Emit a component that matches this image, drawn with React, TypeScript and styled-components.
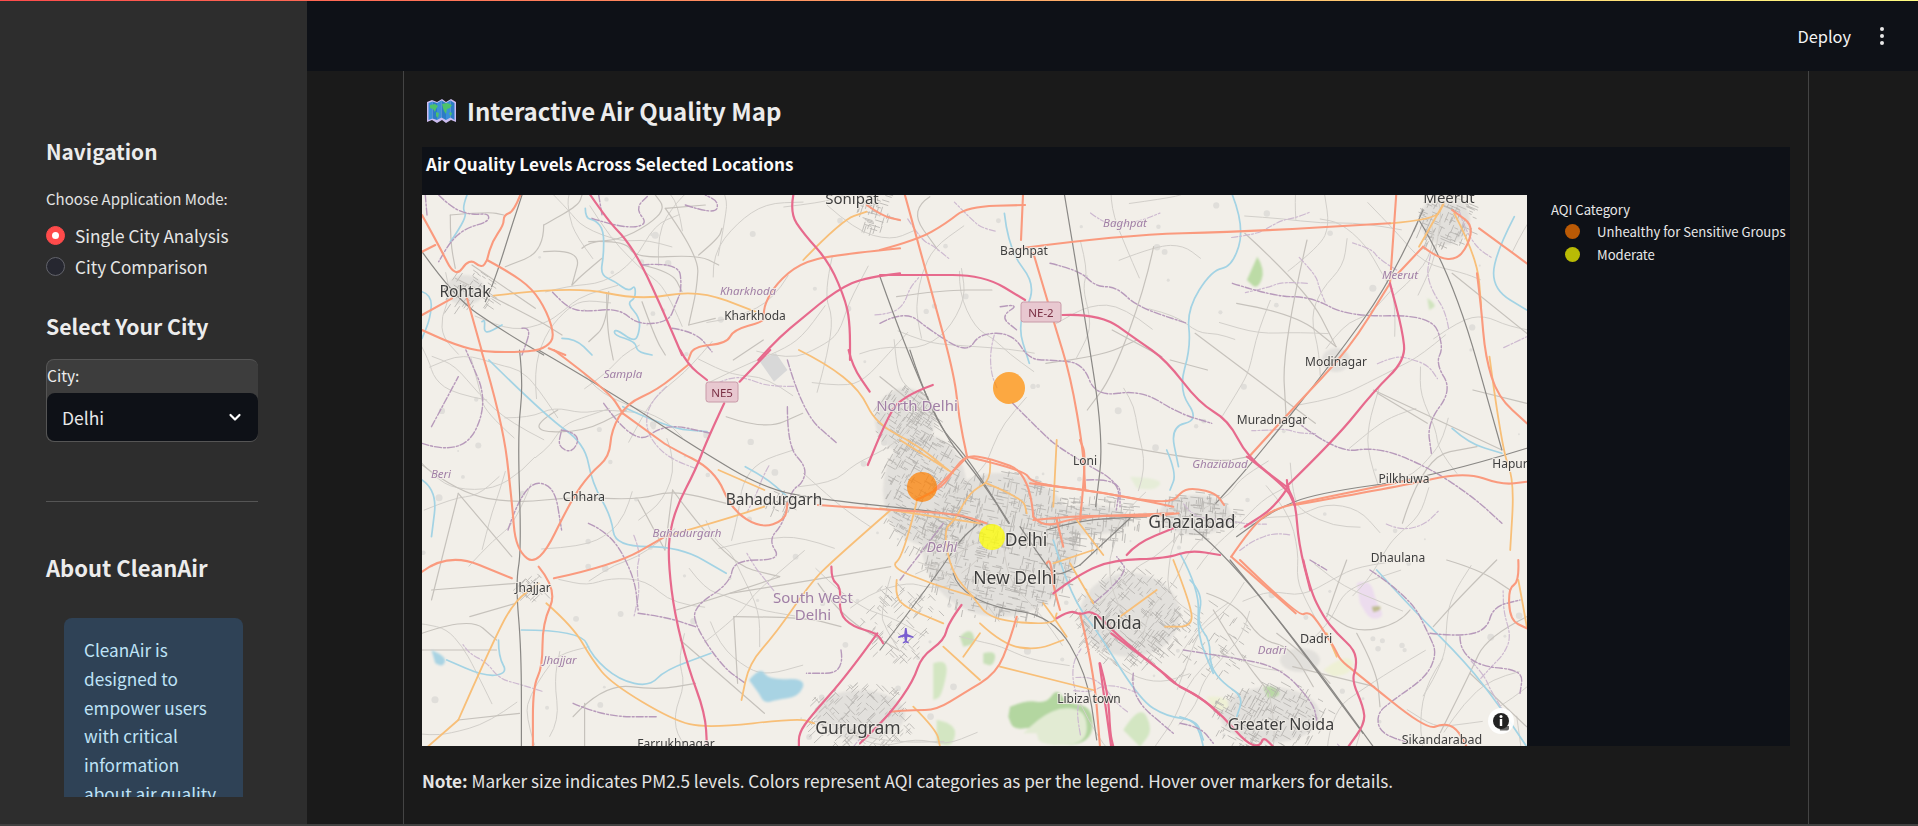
import React from "react";
import styled, { createGlobalStyle } from "styled-components";

const FONT = `"Noto Sans CJK SC", "Source Sans Pro", "Noto Sans", sans-serif`;

const Global = createGlobalStyle`
  html, body { margin: 0; padding: 0; height: 826px; overflow: hidden; background: #1a1a1a; }
  * { box-sizing: border-box; }
  body { font-family: ${FONT}; color: #fafafa; }
`;

const Page = styled.div`
  position: relative;
  display: grid;
  grid-template-columns: 307px 1fr;
  width: 1918px;
  height: 826px;
  border-bottom: 2px solid #404040;
  overflow: hidden;
`;
const TopLine = styled.div`
  position: absolute;
  top: 0; left: 0; right: 0;
  height: 1px;
  background: linear-gradient(90deg, #ff4b4b, #fffd80);
  z-index: 2;
`;
const Sidebar = styled.aside`
  background: #2d2d2d;
  height: 824px;
`;
const SideScroll = styled.div`
  height: 797px;
  overflow: hidden;
  padding: 136px 49px 0 46px;
`;
const SideHeading = styled.h3<{ $top?: number; $size: number }>`
  margin: ${(p) => p.$top ?? 0}px 0 0;
  font-size: ${(p) => p.$size}px;
  line-height: 30px;
  font-weight: 600;
  color: #ececec;
`;
const RadioLabel = styled.div`
  margin-top: 23px;
  font-size: 15px;
  line-height: 20px;
  color: #e2e2e2;
`;
const RadioRow = styled.div<{ $first?: boolean }>`
  display: flex;
  align-items: center;
  gap: 10px;
  height: 24px;
  margin-top: ${(p) => (p.$first ? 14 : 7)}px;
  font-size: 17.2px;
  color: #e6e6e6;
`;
const RadioDot = styled.span<{ $on?: boolean }>`
  width: 19px;
  height: 19px;
  border-radius: 50%;
  flex: none;
  display: flex;
  align-items: center;
  justify-content: center;
  background: ${(p) => (p.$on ? "#ff4b4b" : "#262730")};
  border: 1px solid ${(p) => (p.$on ? "#ff4b4b" : "#62636b")};
  &::after {
    content: "";
    display: ${(p) => (p.$on ? "block" : "none")};
    width: 7px;
    height: 7px;
    border-radius: 50%;
    background: #fff;
  }
`;
const SelectGroup = styled.div`
  margin-top: 18px;
  height: 83px;
  background: #3d3d3d;
  border: 1px solid #555;
  border-right: none;
  border-radius: 8px;
  display: flex;
  flex-direction: column;
`;
const SelectLabel = styled.label`
  height: 33px;
  font-size: 15.5px;
  line-height: 30px;
  color: #ececec;
`;
const SelectBox = styled.div`
  flex: 1;
  background: #0e1117;
  border-radius: 8px;
  display: flex;
  align-items: center;
  justify-content: space-between;
  padding: 0 16px 0 15px;
  font-size: 17.5px;
  color: #e8e8e8;
`;
const Divider = styled.hr`
  border: none;
  border-top: 1px solid #555;
  margin: 59px 0 0;
`;
const InfoBox = styled.div`
  margin: 36px 15px 0 18px;
  background: #2f4256;
  border-radius: 8px;
  padding: 18px 18px 18px 20px;
  font-size: 17.2px;
  line-height: 28.8px;
  color: #bfe3f7;
`;

const Main = styled.main`
  display: flex;
  flex-direction: column;
  height: 824px;
`;
const Header = styled.header`
  height: 71px;
  flex: none;
  background: #0e1117;
  display: flex;
  align-items: center;
  justify-content: flex-end;
  gap: 29px;
  padding-right: 34px;
`;
const DeployText = styled.span`
  font-size: 16.4px;
  color: #f4f4f4;
`;
const Dots = styled.span`
  display: flex;
  flex-direction: column;
  gap: 3px;
  i { display: block; width: 4px; height: 4px; border-radius: 50%; background: #e8e8e8; }
`;
const Content = styled.div`
  flex: 1;
  background: #1a1a1a;
  padding-left: 96px;
`;
const Column = styled.section`
  width: 1406px;
  height: 100%;
  border-left: 1px solid #444;
  border-right: 1px solid #444;
  padding: 21px 0 0 18px;
`;
const Title = styled.h2`
  margin: 0;
  display: flex;
  align-items: center;
  gap: 11px;
  height: 38px;
  padding-left: 5px;
  font-size: 24px;
  line-height: 38px;
  font-weight: 600;
  color: #ececec;
`;
const PlotCard = styled.div`
  margin-top: 17px;
  width: 1368px;
  height: 599px;
  background: #0e1117;
  display: flex;
  flex-direction: column;
`;
const PlotTitle = styled.div`
  height: 48px;
  flex: none;
  padding: 4px 0 0 4px;
  font-size: 17.15px;
  line-height: 26px;
  font-weight: 700;
  color: #fafafa;
`;
const PlotBody = styled.div`
  display: flex;
  flex: 1;
`;
const MapSvg = styled.svg`
  width: 1105px;
  height: 551px;
  flex: none;
  display: block;
  background: #f2efe9;
  filter: blur(0.4px);
`;
const Legend = styled.div`
  margin-left: 24px;
  padding-top: 5px;
  font-size: 13.1px;
  color: #e8e8e8;
`;
const LegendTitle = styled.div`
  line-height: 20px;
`;
const LegendRow = styled.div`
  display: flex;
  align-items: center;
  height: 23px;
  padding-left: 14px;
  gap: 17px;
`;
const LegendDot = styled.span<{ $c: string }>`
  width: 15px;
  height: 15px;
  border-radius: 50%;
  background: ${(p) => p.$c};
  flex: none;
`;
const Note = styled.p`
  margin: 22px 0 0;
  font-size: 17.2px;
  line-height: 26px;
  color: #e4e4e4;
  b { font-weight: 700; }
`;

type P = [number, number];
const conv = (ox: number, oy: number, sx: number, sy: number) => (s: string): P[] =>
  s.trim().split(/\s+/).map((t) => {
    const [a, b] = t.split(",").map(Number);
    return [ox + a / sx, oy + b / sy] as P;
  });
const z3 = conv(400, 60, 3, 3);
const z4 = conv(880, 190, 2.412, 3);
const z5 = conv(420, 350, 2.613, 3);
const z6 = conv(1000, 480, 1.708, 3);
const z8 = conv(880, 440, 3, 3);
const zr = conv(422, 195, 3, 3);
const zg = conv(1180, 560, 3, 3);

const smooth = (p: P[]) => {
  let d = `M${p[0][0].toFixed(1)} ${p[0][1].toFixed(1)}`;
  for (let i = 1; i < p.length - 1; i++) {
    const mx = (p[i][0] + p[i + 1][0]) / 2;
    const my = (p[i][1] + p[i + 1][1]) / 2;
    d += `Q${p[i][0].toFixed(1)} ${p[i][1].toFixed(1)} ${mx.toFixed(1)} ${my.toFixed(1)}`;
  }
  const l = p[p.length - 1];
  return d + `L${l[0].toFixed(1)} ${l[1].toFixed(1)}`;
};

const water: P[][] = [
  zr("490,40 490,70 520,75 545,105 545,180 535,240 580,260 620,290 640,270 640,310 615,325 655,370 650,420 635,440 580,400 575,420 640,440 645,470 690,480"),
  zr("420,430 460,430 510,480"),
  zr("135,0 120,40 135,60 100,120 85,140"),
  zr("0,290 30,300 25,370 0,430"),
  zr("180,380 190,370 185,420 240,390"),
  z5("180,30 330,200 430,280 450,400 500,500 510,590 680,590 800,670"),
  z5("530,170 650,235 750,245"),
  z5("5,390 45,420 30,560"),
  z5("265,840 420,840 450,920 520,990 600,1010 640,960 760,910"),
  z5("205,870 205,920 230,970 170,980 70,930"),
  z5("850,350 900,380 960,440"),
  z4("850,15 880,110 850,230 800,240 740,360 750,470 720,600 770,690 700,710 720,830"),
  z4("300,70 310,180 380,290 330,400 360,520"),
  z4("1530,80 1480,200 1480,300 1560,360"),
  z4("1380,715 1420,760 1500,790"),
  zg("590,30 700,150 860,310 960,440 1040,560"),
  zg("0,470 40,480 60,520 70,560"),
  zg("30,60 70,100 50,190 90,240 90,320 130,370 190,410 170,470"),
  z8("520,300 550,400 600,510 650,570 780,780 860,830 950,840 970,900"),
  z8("860,30 890,100 870,150"),
  z8("900,340 960,450 950,580 1000,700"),
];
const minor: P[][] = [
  zr("365,90 375,85 470,30 480,0"),
  zr("365,90 365,170 250,215"),
  zr("365,170 480,160 450,270"),
  zr("500,140 610,135 640,190 830,180 890,210"),
  zr("480,160 500,140 590,135 680,90 730,40 700,0"),
  zr("730,40 830,180 825,280 800,390"),
  zr("730,40 850,30"),
  zr("830,180 890,130 900,100"),
  zr("540,190 480,240 450,270"),
  zr("660,210 750,230 780,290"),
  zr("100,250 340,370 420,420"),
  zr("150,210 340,340"),
  zr("85,60 85,140 100,220"),
  zr("85,60 200,50 245,60"),
  zr("560,290 555,390 500,440"),
  zr("660,320 700,430 730,480"),
  zr("800,390 880,370"),
  z3("620,700 620,800 640,900"),
  z3("1090,840 1000,900"),
  z5("0,340 100,430 250,460 400,440 570,450 660,420 800,460"),
  z5("100,430 30,750"),
  z5("100,430 240,620"),
  z5("360,180 270,240 420,250 540,180"),
  z5("660,420 800,640 940,680"),
  z5("570,450 640,600"),
  z5("940,680 810,730 670,780"),
  z5("1230,650 1030,690 810,730"),
  z5("30,720 250,700"),
  z5("130,800 250,760"),
  z5("5,850 130,800 200,870"),
  z5("680,870 900,1090"),
  z5("100,1110 260,1090"),
  z5("5,900 200,900"),
  z5("400,1100 480,1000 620,1020 720,1000"),
  z5("430,1060 430,1190"),
  z5("800,200 900,240 1000,190"),
  z5("640,600 660,420"),
  z5("820,800 1000,800 1100,830"),
  z5("820,800 830,1000"),
  z5("1040,700 1100,800 1250,900"),
  z4("660,170 640,290 560,560 500,660"),
  z4("560,420 680,500"),
  z4("760,430 1050,700"),
  z4("860,340 1000,370 1100,470"),
  z4("1030,150 970,470 980,690"),
  z4("1190,600 1500,780"),
  z4("400,520 530,500 620,450"),
  z4("550,760 800,820 890,800"),
  z4("1380,250 1560,430"),
  z4("1260,1000 1310,800 1440,770"),
  z4("700,510 790,540"),
  z4("0,560 120,680"),
  z4("880,130 1030,300 1100,470"),
  z4("1320,700 1200,610"),
  z4("1430,600 1560,640"),
  z4("40,320 150,300 270,300"),
  z4("120,20 70,60 140,180"),
  zg("800,0 900,30 990,90"),
  zg("950,0 840,110 760,200"),
  zg("690,150 660,190 530,220 440,160"),
  zg("500,0 470,80 440,170"),
  zg("1040,170 920,230 870,340 780,520"),
  zg("870,340 1040,500"),
  zg("530,220 590,330 600,440"),
  zg("80,100 170,130 240,240 330,260 400,380"),
  zg("100,150 190,300 270,400"),
  zg("290,220 370,280 450,370"),
  z6("640,620 500,560"),
];
const rail: P[][] = [
  zr("0,170 100,310 230,400 365,480"),
  zr("300,0 270,90 220,250 190,320"),
  z5("310,0 490,120 730,300 900,415 1050,450 1400,490 1470,525"),
  z5("1280,0 1340,210 1430,320 1540,520"),
  z5("260,0 270,100 255,250 265,600 250,700 265,900 265,1190"),
  z8("0,630 160,420 240,300 290,255"),
  z4("445,15 490,350 540,750 520,950"),
  z4("0,260 120,680 250,880 310,1000"),
  z4("1310,60 1240,260 1090,520 890,830 810,940"),
  z4("1300,90 1380,250 1500,780"),
  z4("1560,775 1340,860 1050,910 950,960 860,1040"),
  z6("330,145 400,240 620,760"),
  zg("150,0 340,230 580,560"),
  z8("500,270 590,240 800,230"),
  z8("220,400 230,440 330,500 520,530 620,700 650,900"),
  z8("600,375 750,235"),
  z8("420,260 500,380 530,410 600,375"),
];
const admin: P[][] = [
  zr("10,0 15,60"),
  zr("50,0 90,40 150,60 200,55 200,80 130,100 85,140 50,200"),
  zr("530,0 540,60"),
  zr("510,70 600,100 680,90 640,40 680,0"),
  zr("790,30 880,60 890,20 850,0"),
  zr("660,210 770,200 780,280 760,330 740,380 650,390 590,340 490,350 440,340 390,290"),
  zr("750,400 820,410 870,470"),
  zr("300,400 330,395 300,480"),
  z4("410,220 480,240 520,290 570,290 620,350 740,400"),
  z4("850,280 950,320 1040,320 1130,380 1330,375 1360,470 1340,520 1380,600 1320,700 1330,790"),
  z4("0,400 60,360 120,420 210,490 240,430 320,430 360,510 420,510 490,520 520,620 630,600 720,670 800,700"),
  z4("320,640 400,740 430,770 480,810 580,880 570,960"),
  z4("1000,690 1100,790 1200,770 1320,830 1430,920 1500,1000"),
  z4("290,350 340,340 290,380 330,420"),
  z5("5,280 110,320 180,160 120,0"),
  z5("30,230 100,80"),
  z5("960,170 960,290 1010,350 1000,400 970,420 950,520 910,570 945,630 820,630 810,700 715,770 720,830 790,950 850,1000"),
  z5("570,790 640,800 720,830"),
  z5("1100,900 1110,970 1010,970"),
  z5("370,240 420,250 400,310 360,290 370,240"),
  z5("230,540 270,400 350,400 370,540"),
  z5("440,520 500,550 560,680 570,780"),
  z5("400,1060 480,1100 620,1100"),
  z5("480,160 560,290 640,220 760,250"),
  z5("960,30 1000,190 1090,280"),
  z8("640,490 750,400 710,350"),
  z8("190,250 60,420"),
  z8("620,120 720,115 720,200"),
  z8("760,700 750,770 880,880"),
  zg("570,30 690,110 750,230 770,280 740,350 640,420 590,460 600,520 690,550"),
  zg("750,220 840,230 920,210 940,140 1020,120"),
  zg("840,230 840,270 900,320 1030,330 1020,400"),
  zg("0,490 60,500 100,550"),
  zg("390,0 440,30"),
  zg("10,270 140,290 300,320 400,430 410,480"),
];
const secondary: P[][] = [
  zr("215,302 450,272 655,316 828,284 1000,350"),
  z3("1210,600 1325,480 1400,455"),
  z4("1230,100 1340,90 1360,40"),
  z4("1385,70 1440,200 1450,350"),
  z4("1300,170 1360,40"),
  z4("1470,500 1500,780 1530,870 1520,1080"),
  z5("990,0 1060,40 1150,120 1190,220 1300,285 1380,360"),
  z5("1230,480 1080,630 1020,700 930,850 860,940 840,1050"),
  z5("100,1110 200,850 250,750 310,700"),
  z5("330,760 400,830 450,930 500,1000 660,1110 750,1135 990,1105 1030,1120"),
  z5("780,360 900,420"),
  z5("640,560 790,510 900,470"),
  z5("100,1110 20,1190"),
  z8("60,0 220,100"),
  z8("330,60 335,120 280,150 250,190 225,240 190,270 215,400 280,470 330,540 520,555 530,520"),
  z8("110,185 70,350 30,380 150,430 280,470"),
  z8("320,130 430,175 440,220"),
  z8("0,205 300,250"),
  z8("50,420 45,460 70,500 190,550"),
  z8("190,620 300,720"),
  z8("300,580 250,650"),
  z8("300,550 370,615 470,630 550,600"),
  z8("360,680 640,750"),
  z8("530,0 520,200"),
  z8("590,240 670,345"),
  z8("520,370 640,330"),
  z8("570,370 640,490"),
  z8("720,530 830,450"),
  z8("880,360 935,500 935,560 855,560"),
  z8("100,800 170,870 180,920"),
  z8("490,490 520,530 560,590"),
  zg("1015,60 1030,140 1040,200"),
  zg("440,220 470,290"),
];
const trunk: P[][] = [
  zr("295,0 275,50 245,60 245,90 210,140 195,195"),
  zr("195,195 260,230 330,280 375,350 398,425 375,455 330,470 190,472 100,450 0,405"),
  zr("0,60 50,150 100,250 142,190 180,220 195,195"),
  zr("135,310 180,470"),
  zr("0,170 40,150"),
  zr("0,360 90,310"),
  zr("380,460 430,480"),
  z3("1500,565 1300,585 1200,610 1130,670 1095,730 1090,770 1090,785 1000,810 980,850 880,860 865,900"),
  z3("1400,435 1450,470 1500,480"),
  z5("160,0 215,210 240,450 250,600 310,650 395,450 445,370 495,320 500,240 540,160 620,120 700,45"),
  z5("530,190 620,265 650,290 770,360 815,480 890,535 955,510 960,460"),
  z5("0,670 70,605 240,685"),
  z5("350,685 510,645 640,560"),
  z5("310,650 360,720 320,820 320,950 295,1010 295,1190"),
  z5("350,0 490,120 530,190"),
  z5("1040,465 1230,480 1400,490 1480,520"),
  z4("60,15 90,150 130,330 180,560 190,680 210,800"),
  z4("0,180 90,150 160,100 210,50 350,45"),
  z4("345,15 340,150"),
  z4("340,175 580,135 880,125 1230,100"),
  z4("1245,15 1230,280"),
  z4("370,190 420,400 460,560 490,780 495,900"),
  z4("210,800 350,840 365,880 500,900 700,945 730,900 760,895 810,910 830,945"),
  z4("890,800 1000,650 1130,480 1230,280"),
  z4("1000,945 1250,890 1410,845 1500,885 1560,875"),
  z4("1445,115 1560,220"),
  z4("1440,250 1450,350 1460,500 1490,620 1560,700"),
  z4("210,800 180,840 130,900"),
  z4("370,990 480,975 650,980 720,970"),
  z4("1310,170 1250,250"),
  z4("1310,170 1380,240 1440,115 1380,60"),
  z6("395,230 505,400"),
  zg("180,0 355,170 385,155 410,180 465,265 480,300 525,335 740,510 790,490 830,505 860,560"),
  z6("395,230 430,140 465,90 505,70 700,0"),
  zg("1015,0 1018,65 985,85 990,180 1040,205"),
  z8("460,230 450,100 330,55 260,45 220,90 190,140 110,180"),
  z8("450,130 620,150 760,175 880,200"),
  z8("460,230 490,265 590,230 880,220"),
  z8("500,370 510,350 520,440 540,510"),
  z8("410,530 390,600 350,700 250,760 170,810 100,810 30,815"),
  z8("530,240 550,320"),
  z8("600,240 620,50 600,0"),
  z8("600,520 640,680 660,920"),
];
const motorway: P[][] = [
  zr("505,0 560,80 610,130 660,210 720,340 780,480"),
  z3("1180,405 1170,460 1210,520 1290,610 1340,730 1350,800 1350,900"),
  z3("1500,640 1400,650 1310,690 1200,780 1140,830 1075,900"),
  z5("915,0 835,95"),
  z5("680,0 700,45 750,90"),
  z5("795,160 750,270 720,360 670,470 650,560 650,650 665,790 700,950 745,1090 750,1190"),
  z5("1120,0 1130,50 1175,125"),
  z5("1340,105 1255,140 1215,220 1170,345"),
  z5("1075,650 1075,690 1100,710 1095,790 1130,830 1195,850 1210,880"),
  z5("1195,850 1120,970 1020,1100 990,1150 990,1190"),
  z5("1415,765 1380,820 1370,870 1310,920 1290,990 1230,1090 1150,1180"),
  z4("0,255 100,255 250,255 350,330"),
  z4("440,375 530,370 620,450 690,510 770,640 840,690 885,800 980,890"),
  z4("980,890 1100,745 1190,605 1268,510 1260,420 1230,280"),
  z4("885,800 980,890 1000,945"),
  z4("985,890 955,950 880,1010"),
  zg("370,0 390,90 430,170 470,220 525,270 530,320 515,360 550,440 555,490 505,560"),
  z6("490,0 490,20 505,70 510,190 530,330"),
  zg("0,380 60,410 130,470 200,550 240,560 250,530 280,560"),
  z6("190,460 270,565 300,610"),
  z6("170,550 190,800"),
  z8("520,460 600,400 700,360 860,355 930,330 1020,345"),
  z8("740,345 770,310 880,265"),
  z8("530,535 570,510 600,525 640,510 710,585 840,690 880,730 960,770 1020,825"),
  z8("660,670 685,760 690,880 700,920"),
];

const mk = (() => {
  let s = 20240611;
  return () => {
    s = (s * 1664525 + 1013904223) >>> 0;
    return s / 4294967296;
  };
})();
const clusters: [number, number, number, number, number, number][] = [
  [1000, 545, 80, 75, 0.2, 560],
  [925, 490, 45, 60, 0.5, 280],
  [905, 420, 32, 35, 0.6, 150],
  [1130, 615, 55, 50, 0.7, 280],
  [1195, 515, 40, 25, 0.1, 130],
  [1090, 520, 50, 25, 0.1, 150],
  [1445, 220, 28, 30, 0.4, 100],
  [470, 290, 26, 22, 0.6, 50],
  [860, 715, 55, 35, 0.8, 160],
  [1270, 715, 60, 35, 0.5, 190],
  [875, 210, 18, 20, 0.3, 50],
  [780, 500, 14, 12, 0.4, 25],
  [533, 587, 14, 14, 0.8, 25],
  [1200, 640, 50, 40, 0.6, 70],
  [900, 620, 40, 40, 0.8, 90],
];
const cityLines = clusters.map(([cx, cy, rx, ry, ang, n]) => {
  let d = "";
  for (let i = 0; i < n; i++) {
    const a = mk() * Math.PI * 2;
    const r = Math.sqrt(mk());
    const x = cx + Math.cos(a) * r * rx;
    const y = cy + Math.sin(a) * r * ry;
    const th = ang + (mk() < 0.5 ? 0 : Math.PI / 2);
    const l = 3 + mk() * 9;
    d += `M${x.toFixed(1)} ${y.toFixed(1)}l${(Math.cos(th) * l).toFixed(1)} ${(Math.sin(th) * l).toFixed(1)}`;
  }
  return d;
}).join("");

const wiggle = (n: number, lo: number, hi: number) => {
  const out: P[][] = [];
  for (let i = 0; i < n; i++) {
    let x = 422 + mk() * 1105;
    let y = 195 + mk() * 551;
    let th = mk() * Math.PI * 2;
    const pts: P[] = [[x, y]];
    const k = 3 + Math.floor(mk() * 3);
    for (let j = 0; j < k; j++) {
      th += (mk() - 0.5) * 1.4;
      const l = lo + mk() * (hi - lo);
      x += Math.cos(th) * l;
      y += Math.sin(th) * l;
      pts.push([x, y]);
    }
    out.push(pts);
  }
  return out;
};
const rural = wiggle(120, 18, 42);
const ruralAdmin = wiggle(30, 12, 26);
const blobs: { x: number; y: number; r: number }[] = [];
for (let i = 0; i < 150; i++) {
  blobs.push({ x: 422 + mk() * 1105, y: 195 + mk() * 551, r: 1 + mk() * 2.6 });
}

const greyAreas: [number, number, number, number][] = [
  [1000, 545, 78, 72], [925, 490, 42, 55], [905, 420, 30, 32], [1130, 615, 50, 42],
  [1195, 515, 36, 20], [1445, 220, 25, 25], [465, 290, 20, 15], [860, 715, 45, 25],
  [1270, 715, 50, 28], [1090, 520, 40, 15], [1336, 360, 14, 12], [1300, 660, 20, 12],
];

const labels: { x: number; y: number; t: string; s: number; k?: "p" | "i" }[] = [
  { x: 852, y: 198, t: "Sonipat", s: 15 },
  { x: 1449, y: 197, t: "Meerut", s: 15 },
  { x: 1125, y: 222, t: "Baghpat", s: 11.5, k: "i" },
  { x: 1024, y: 250, t: "Baghpat", s: 12 },
  { x: 1400, y: 274, t: "Meerut", s: 11.5, k: "i" },
  { x: 465, y: 291, t: "Rohtak", s: 15.5 },
  { x: 748, y: 290, t: "Kharkhoda", s: 11.5, k: "i" },
  { x: 755, y: 315, t: "Kharkhoda", s: 12 },
  { x: 623, y: 373, t: "Sampla", s: 11.5, k: "i" },
  { x: 917, y: 405, t: "North Delhi", s: 15, k: "p" },
  { x: 1336, y: 361, t: "Modinagar", s: 12 },
  { x: 1272, y: 419, t: "Muradnagar", s: 12 },
  { x: 1085, y: 460, t: "Loni", s: 12 },
  { x: 1220, y: 463, t: "Ghaziabad", s: 11.5, k: "i" },
  { x: 1510, y: 463, t: "Hapur", s: 12 },
  { x: 1404, y: 478, t: "Pilkhuwa", s: 12 },
  { x: 1192, y: 521, t: "Ghaziabad", s: 17.5 },
  { x: 1026, y: 539, t: "Delhi", s: 17.5 },
  { x: 1015, y: 577, t: "New Delhi", s: 17.5 },
  { x: 942, y: 547, t: "Delhi", s: 13.5, k: "i" },
  { x: 1117, y: 622, t: "Noida", s: 17.5 },
  { x: 774, y: 499, t: "Bahadurgarh", s: 15.5 },
  { x: 441, y: 473, t: "Beri", s: 11.5, k: "i" },
  { x: 584, y: 496, t: "Chhara", s: 12.5 },
  { x: 687, y: 532, t: "Bahadurgarh", s: 11.5, k: "i" },
  { x: 813, y: 597, t: "South West", s: 15, k: "p" },
  { x: 813, y: 614, t: "Delhi", s: 15, k: "p" },
  { x: 533, y: 587, t: "Jhajjar", s: 12 },
  { x: 560, y: 659, t: "Jhajjar", s: 11.5, k: "i" },
  { x: 858, y: 727, t: "Gurugram", s: 17.5 },
  { x: 676, y: 743, t: "Farrukhnagar", s: 12 },
  { x: 1398, y: 557, t: "Dhaulana", s: 12 },
  { x: 1316, y: 638, t: "Dadri", s: 12.5 },
  { x: 1272, y: 649, t: "Dadri", s: 11.5, k: "i" },
  { x: 1089, y: 698, t: "Libiza town", s: 12 },
  { x: 1281, y: 724, t: "Greater Noida", s: 16 },
  { x: 1442, y: 739, t: "Sikandarabad", s: 12.5 },
];

const MapLabel = styled.text<{ $s: number; $k?: string }>`
  font-family: "Noto Sans", sans-serif;
  font-size: ${(p) => p.$s}px;
  font-style: ${(p) => (p.$k === "i" ? "italic" : "normal")};
  fill: ${(p) => (p.$k ? "#a07fa6" : "#3e3e3e")};
  stroke: #f2efe9;
  stroke-width: 2px;
  stroke-opacity: 0.8;
  paint-order: stroke;
  text-anchor: middle;
  dominant-baseline: central;
`;
const ShieldText = styled.text`
  font-family: "Noto Sans", sans-serif;
  font-size: 11.5px;
  fill: #7a2f44;
  text-anchor: middle;
  dominant-baseline: central;
`;

const Lines: React.FC<{ data: P[][]; c: string; w: number; dash?: string }> = ({ data, c, w, dash }) => (
  <g fill="none" stroke={c} strokeWidth={w} strokeLinecap="round" strokeLinejoin="round" strokeDasharray={dash}>
    {data.map((p, i) => (
      <path key={i} d={smooth(p)} />
    ))}
  </g>
);

const Patch: React.FC<{ p: P[]; c: string }> = ({ p, c }) => <path d={smooth(p) + "Z"} fill={c} />;

const Shield: React.FC<{ x: number; y: number; w: number; t: string }> = ({ x, y, w, t }) => (
  <g>
    <rect x={x - w / 2} y={y - 10} width={w} height={20} rx={2.5} fill="#e8c8d0" stroke="#c89aa8" />
    <ShieldText x={x} y={y}>{t}</ShieldText>
  </g>
);

const AirMap = () => (
  <MapSvg viewBox="422 195 1105 551" role="img" aria-label="Map of Delhi region">
    <defs>
      <filter id="soft" x="-10%" y="-10%" width="120%" height="120%">
        <feGaussianBlur stdDeviation="1.2" />
      </filter>
    </defs>
    <rect x="422" y="195" width="1105" height="551" fill="#f2efe9" />
    {blobs.map((b, i) => (
      <circle key={i} cx={b.x} cy={b.y} r={b.r} fill="#e0deda" />
    ))}
    {greyAreas.map(([x, y, rx, ry], i) => (
      <ellipse key={i} cx={x} cy={y} rx={rx} ry={ry} fill="#dfddd9" opacity="0.8" filter="url(#soft)" />
    ))}
    <polygon points={z5("885,30 930,10 960,60 925,95").map((q) => q.join(",")).join(" ")} fill="#d8d8d8" />
    <g filter="url(#soft)">
      <Patch p={z8("390,800 440,780 500,790 530,745 560,790 640,800 635,915 480,915 470,860 400,870 385,830")} c="#b3d6a0" />
      <Patch p={z8("430,880 480,830 550,800 620,815 620,915 480,915 470,880")} c="#e2ebd3" />
      <Patch p={z8("160,670 210,650 185,770 160,780")} c="#d3e6c2" />
      <Patch p={z8("730,870 780,790 820,870 780,920")} c="#d3e6c2" />
      <Patch p={z8("170,840 230,850 220,920 170,910")} c="#d3e6c2" />
      <Patch p={z8("240,590 270,560 290,610 250,620")} c="#c8e0b8" />
      <Patch p={z8("310,640 350,630 340,680 310,670")} c="#c8e0b8" />
      <Patch p={z8("750,110 850,115 830,150 770,145")} c="#e6edd8" />
      <Patch p={z4("910,200 930,240 910,300 885,270")} c="#bcdba6" />
      <Patch p={z4("1320,325 1345,345 1325,360")} c="#cfe3bd" />
      <Patch p={zg("250,380 280,375 305,405 265,415")} c="#b9d8a5" />
      <Patch p={zg("430,330 480,290 525,300 510,340 460,350")} c="#eef0d5" />
      <Patch p={zg("80,410 140,405 150,450 100,450")} c="#eef0d5" />
      <Patch p={zg("530,70 570,55 590,130 615,170 570,180 540,130")} c="#ecdcee" />
      <Patch p={zg("575,140 600,135 603,150 580,157")} c="#bfbd90" />
    </g>
    <path d={cityLines} fill="none" stroke="#b4b1ad" strokeWidth="0.8" />
    <Lines data={rural} c="#d2cfca" w={1} />
    <Lines data={minor} c="#c6c2bc" w={1.2} />
    <Lines data={water} c="#a3d3e4" w={1.7} />
    <g filter="url(#soft)">
      <Patch p={z5("860,990 890,950 910,990 1010,985 990,1040 930,1050 900,1060 885,1030")} c="#a8d3e3" />
      <Patch p={z5("30,900 70,920 60,950 40,940")} c="#a8d3e3" />
    </g>
    <Lines data={ruralAdmin} c="#cdb9d0" w={1.2} dash="6 2 2 2" />
    <Lines data={admin} c="#b79abb" w={1.4} dash="7 2 2 2" />
    <Lines data={rail} c="#8a8885" w={1.2} />
    <Lines data={secondary} c="#f8bf78" w={1.8} />
    <Lines data={trunk} c="#fa9a7e" w={2.1} />
    <Lines data={motorway} c="#e76a8d" w={2.2} />
    <Shield x={722} y={392} w={32} t="NE5" />
    <Shield x={1041} y={312} w={40} t="NE-2" />
    <path d="M905 628l1.6 0 .8 6 6 2.5 0 1.6-6-1.4-.6 4.2 2 1.4 0 1.1-3-.8-3 .8 0-1.1 2-1.4-.6-4.2-6 1.4 0-1.6 6-2.5.8-6z" fill="#7a5fd0" />
    {labels.map((l, i) => (
      <MapLabel key={i} x={l.x} y={l.y} $s={l.s} $k={l.k}>{l.t}</MapLabel>
    ))}
    <ellipse cx="1009" cy="388" rx="16" ry="16" fill="#ff8c00" opacity="0.72" />
    <circle cx="922" cy="487" r="15" fill="#ff8000" opacity="0.72" />
    <circle cx="992" cy="537" r="13" fill="#ffff00" opacity="0.75" />
    <circle cx="1501" cy="721" r="13" fill="#fff" opacity="0.9" />
    <path d="M1499 726h10v2.500a2 2 0 0 1-2 2h-7z" fill="#666" />
    <circle cx="1501" cy="721" r="8" fill="#222" />
    <circle cx="1501" cy="716.500" r="1.500" fill="#fff" />
    <rect x="1499.800" y="719" width="2.400" height="7" fill="#fff" />
  </MapSvg>
);

const MapEmoji = () => (
  <svg width="29" height="26" viewBox="0 0 29 26" aria-hidden="true">
    <path d="M0 4l5-2 5 2 5-3 4 3 5-3 5 3v20l-5-2-5 3-4-3-5 3-5-3-5 2z" fill="#cbbcf0" />
    <path d="M1.500 5l4-1.500v17l-4 1.500z" fill="#3a8fd8" />
    <path d="M5.500 3.500l4.500 1.500v17l-4.500-1.500z" fill="#2d7cc6" />
    <path d="M10 5l4.500-2.500v17L10 22z" fill="#3a8fd8" />
    <path d="M14.500 2.500L19 5v17l-4.500-2.500z" fill="#2d7cc6" />
    <path d="M19 5l4.500-2.500v17L19 22z" fill="#3a8fd8" />
    <path d="M23.500 2.500L27.500 5v17l-4-2.500z" fill="#2d7cc6" />
    <path d="M3 7l5-1 3 2-2 3-1 3-2-3-3-1zM9 14l3 1-1 5-2-2zM15 6l5-1 5 2-2 3-3 1-1 5-2-3-1-3zM23 14l2 1-1 3-2-2z" fill="#4dc26a" />
  </svg>
);

const Chevron = () => (
  <svg width="14" height="14" viewBox="0 0 14 14" fill="none" stroke="#fff" strokeWidth="2.2" strokeLinecap="round" strokeLinejoin="round" aria-hidden="true">
    <path d="M2.500 5l4.500 4.500L11.500 5" />
  </svg>
);

export default function App() {
  return (
    <>
      <Global />
      <Page>
        <TopLine />
        <Sidebar>
          <SideScroll>
            <SideHeading $size={20.8}>Navigation</SideHeading>
            <RadioLabel>Choose Application Mode:</RadioLabel>
            <RadioRow $first>
              <RadioDot $on />
              Single City Analysis
            </RadioRow>
            <RadioRow>
              <RadioDot />
              City Comparison
            </RadioRow>
            <SideHeading $size={21.2} $top={33}>Select Your City</SideHeading>
            <SelectGroup>
              <SelectLabel>City:</SelectLabel>
              <SelectBox>
                Delhi
                <Chevron />
              </SelectBox>
            </SelectGroup>
            <Divider />
            <SideHeading $size={22} $top={50}>About CleanAir</SideHeading>
            <InfoBox>
              CleanAir is designed to empower users with critical information about air quality and its impact on health.
            </InfoBox>
          </SideScroll>
        </Sidebar>
        <Main>
          <Header>
            <DeployText>Deploy</DeployText>
            <Dots><i /><i /><i /></Dots>
          </Header>
          <Content>
            <Column>
              <Title>
                <MapEmoji />
                Interactive Air Quality Map
              </Title>
              <PlotCard>
                <PlotTitle>Air Quality Levels Across Selected Locations</PlotTitle>
                <PlotBody>
                  <AirMap />
                  <Legend>
                    <LegendTitle>AQI Category</LegendTitle>
                    <LegendRow><LegendDot $c="#bb5a05" />Unhealthy for Sensitive Groups</LegendRow>
                    <LegendRow><LegendDot $c="#b9bb05" />Moderate</LegendRow>
                  </Legend>
                </PlotBody>
              </PlotCard>
              <Note>
                <b>Note:</b> Marker size indicates PM2.5 levels. Colors represent AQI categories as per the legend. Hover over markers for details.
              </Note>
            </Column>
          </Content>
        </Main>
      </Page>
    </>
  );
}
